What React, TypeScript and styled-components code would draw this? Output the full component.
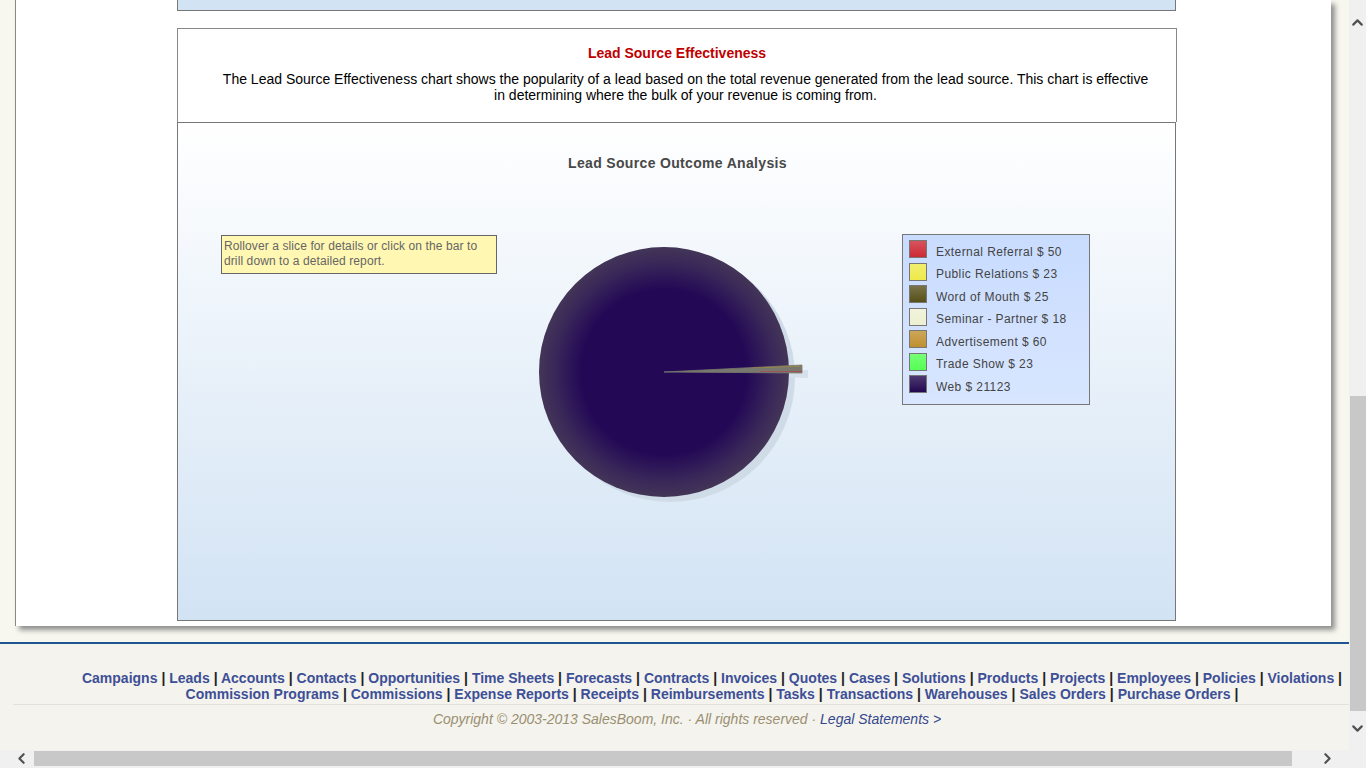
import styled, { createGlobalStyle } from 'styled-components'
import { ChevronDown, ChevronLeft, ChevronRight, ChevronUp } from 'lucide-react'

const GlobalStyle = createGlobalStyle`
  html, body {
    margin: 0;
    padding: 0;
    overflow: hidden;
  }
  body {
    font-family: "Liberation Sans", Arial, sans-serif;
  }
`

const Screen = styled.div`
  width: 1366px;
  height: 768px;
  display: grid;
  grid-template-columns: 1349px 17px;
  grid-template-rows: 750px 18px;
  overflow: hidden;
  background: #f0f0f0;
`

const Page = styled.div`
  display: flex;
  flex-direction: column;
  background: #f7f7ef;
  overflow: hidden;
`

const Panel = styled.main`
  width: 1316px;
  height: 626px;
  margin-left: 15px;
  box-sizing: border-box;
  padding-left: 161px;
  background: #fff;
  border-left: 1px solid #888;
  box-shadow: 4px 4px 5px #8f8f8f;
  flex-shrink: 0;
`

const PreviousChart = styled.div`
  width: 999px;
  height: 11px;
  box-sizing: border-box;
  background: #d2e3f4;
  border: 1px solid #777;
  border-top: 0;
`

const InfoBox = styled.section`
  width: 1000px;
  height: 94px;
  margin-top: 17px;
  box-sizing: border-box;
  border: 1px solid #888;
  border-bottom: 0;
  padding: 16px 26px 0 43px;
  text-align: center;
`

const InfoTitle = styled.h2`
  margin: 0 17px 10px 0;
  font-size: 14px;
  line-height: 16px;
  font-weight: bold;
  color: #c00000;
`

const InfoText = styled.p`
  margin: 0;
  font-size: 14px;
  line-height: 16px;
  color: #000;
`

const ChartCard = styled.section`
  width: 999px;
  height: 499px;
  box-sizing: border-box;
  border: 1px solid #777;
  background: linear-gradient(#ffffff, #d2e3f4);
  padding-top: 32px;
`

const ChartTitle = styled.h3`
  margin: 0 0 0 2px;
  font-size: 14px;
  line-height: 16px;
  font-weight: bold;
  letter-spacing: 0.33px;
  text-align: center;
  color: #484848;
`

const ChartRow = styled.div`
  display: flex;
  align-items: flex-start;
  margin-top: 63px;
  padding-left: 43px;
`

const Note = styled.div`
  width: 276px;
  height: 39px;
  box-sizing: border-box;
  flex-shrink: 0;
  margin-top: 1px;
  padding: 3px 2px;
  background: #fff7b2;
  border: 1px solid #666;
  font-size: 12px;
  line-height: 15px;
  letter-spacing: 0.1px;
  color: #666;
`

const PieChart = styled.svg`
  width: 280px;
  height: 280px;
  flex-shrink: 0;
  margin: 7px 0 0 38px;
`

const Legend = styled.ul`
  list-style: none;
  width: 188px;
  height: 171px;
  box-sizing: border-box;
  flex-shrink: 0;
  margin: 0 0 0 87px;
  padding: 5px 0 0 6px;
  background: linear-gradient(#c9dcff, #d8e6ff);
  border: 1px solid #777;
`

const LegendRow = styled.li`
  display: flex;
  align-items: flex-start;
  gap: 9px;
  height: 22.5px;
  font-size: 12px;
  line-height: 14px;
  letter-spacing: 0.42px;
  color: #444;
`

const Swatch = styled.span<{ $color: string }>`
  width: 18px;
  height: 18px;
  box-sizing: border-box;
  flex-shrink: 0;
  border: 1px solid #777;
  background: linear-gradient(#ffffff33, #ffffff00), ${({ $color }) => $color};
`

const LegendLabel = styled.span`
  padding-top: 4.6px;
`

const Footer = styled.footer`
  margin-top: 16px;
  flex: 1;
  background: #f4f3ee;
  border-top: 2px solid #1f5594;
  padding-top: 26px;
`

const Links = styled.nav`
  margin-left: 75px;
  text-align: center;
  font-size: 14px;
  line-height: 16px;
  font-weight: bold;
  letter-spacing: 0.008px;
  color: #222;
`

const FooterLink = styled.a`
  color: #3d4f96;
  text-decoration: none;
`

const FooterRule = styled.hr`
  margin: 2px 0 0 13px;
  border: 0;
  border-top: 1px solid #e2e1dc;
`

const Copyright = styled.p`
  margin: 6px 0 0 25px;
  text-align: center;
  font-size: 14px;
  line-height: 16px;
  font-style: italic;
  color: #9a8f70;
`

const LegalLink = styled.a`
  color: #34478c;
  text-decoration: none;
`

const VerticalBar = styled.div`
  display: flex;
  flex-direction: column;
  align-items: center;
  background: #f0f0f0;
  color: #505050;
`

const VerticalThumb = styled.div`
  width: 16px;
  height: 315px;
  margin-top: 352px;
  margin-left: 1px;
  flex-shrink: 0;
  background: #c8c8c8;
`

const ArrowSlot = styled.div<{ $size: number }>`
  display: flex;
  align-items: center;
  justify-content: center;
  height: ${({ $size }) => $size}px;
  flex-shrink: 0;
`

const HorizontalBar = styled.div`
  grid-column: 1 / 3;
  display: flex;
  align-items: flex-start;
  background: #f0f0f0;
  color: #505050;
`

const HorizontalThumb = styled.div`
  width: 1258px;
  height: 15px;
  margin-top: 1px;
  flex-shrink: 0;
  background: #c8c8c8;
`

const SideSlot = styled.div<{ $width: number; $pad?: string }>`
  display: flex;
  align-items: center;
  justify-content: center;
  box-sizing: border-box;
  width: ${({ $width }) => $width}px;
  height: 16px;
  padding: ${({ $pad }) => $pad ?? '0'};
  flex-shrink: 0;
`

const modules = [
  'Campaigns', 'Leads', 'Accounts', 'Contacts', 'Opportunities', 'Time Sheets', 'Forecasts',
  'Contracts', 'Invoices', 'Quotes', 'Cases', 'Solutions', 'Products', 'Projects', 'Employees',
  'Policies', 'Violations', 'Commission Programs', 'Commissions', 'Expense Reports', 'Receipts',
  'Reimbursements', 'Tasks', 'Transactions', 'Warehouses', 'Sales Orders', 'Purchase Orders',
]

const slices = [
  { label: 'External Referral $ 50', color: '#cc2a35' },
  { label: 'Public Relations $ 23', color: '#eeea4a' },
  { label: 'Word of Mouth $ 25', color: '#57501a' },
  { label: 'Seminar - Partner $ 18', color: '#eef0d2' },
  { label: 'Advertisement $ 60', color: '#bf9030' },
  { label: 'Trade Show $ 23', color: '#55ff55' },
  { label: 'Web $ 21123', color: '#22084f' },
]

export default function App() {
  return (
    <>
      <GlobalStyle />
      <Screen>
        <Page>
          <Panel>
            <PreviousChart />
            <InfoBox>
              <InfoTitle>Lead Source Effectiveness</InfoTitle>
              <InfoText>
                The Lead Source Effectiveness chart shows the popularity of a lead based on the total
                revenue generated from the lead source. This chart is effective in determining where
                the bulk of your revenue is coming from.
              </InfoText>
            </InfoBox>
            <ChartCard>
              <ChartTitle>Lead Source Outcome Analysis</ChartTitle>
              <ChartRow>
                <Note>Rollover a slice for details or click on the bar to drill down to a detailed report.</Note>
                {/* svg origin sits at page 535,241 */}
                <PieChart viewBox="0 0 280 280">
                  <defs>
                    <radialGradient id="webSlice" cx="50%" cy="50%" r="50%">
                      <stop offset="0%" stopColor="#230856" />
                      <stop offset="66%" stopColor="#230856" />
                      <stop offset="88%" stopColor="#3a2859" />
                      <stop offset="100%" stopColor="#433557" />
                    </radialGradient>
                  </defs>
                  <circle cx="135" cy="136" r="125" fill="#cfdbe7" />
                  <path d="M135 132 L273 129 L273 137 Z" fill="#d6e0ea" />
                  <circle cx="129" cy="131" r="125" fill="url(#webSlice)" />
                  <path d="M129 131 L267 124 L267 132 Z" fill="#78786f" stroke="#78786f" strokeWidth="0.8" />
                  <path d="M218 126.6 L267 124.8 L267 125.6 L218 127.2 Z" fill="#a0883c" />
                  <path d="M225 130.4 L267 129.9 L267 130.7 L225 130.9 Z" fill="#b5404a" />
                </PieChart>
                <Legend>
                  {slices.map(slice => (
                    <LegendRow key={slice.label}>
                      <Swatch $color={slice.color} />
                      <LegendLabel>{slice.label}</LegendLabel>
                    </LegendRow>
                  ))}
                </Legend>
              </ChartRow>
            </ChartCard>
          </Panel>
          <Footer>
            <Links>
              {modules.map(name => (
                <span key={name}>
                  <FooterLink href="#">{name}</FooterLink> |{' '}
                </span>
              ))}
            </Links>
            <FooterRule />
            <Copyright>
              Copyright © 2003-2013 SalesBoom, Inc. · All rights reserved · <LegalLink href="#">Legal Statements &gt;</LegalLink>
            </Copyright>
          </Footer>
        </Page>
        <VerticalBar>
          <ArrowSlot $size={44}>
            <ChevronUp size={17} strokeWidth={3} />
          </ArrowSlot>
          <VerticalThumb />
          <ArrowSlot $size={34}>
            <ChevronDown size={17} strokeWidth={3} />
          </ArrowSlot>
        </VerticalBar>
        <HorizontalBar>
          <SideSlot $width={34} $pad="0 0 0 8px">
            <ChevronLeft size={17} strokeWidth={3} />
          </SideSlot>
          <HorizontalThumb />
          <SideSlot $width={74} $pad="0 3px 0 0">
            <ChevronRight size={17} strokeWidth={3} />
          </SideSlot>
        </HorizontalBar>
      </Screen>
    </>
  )
}
